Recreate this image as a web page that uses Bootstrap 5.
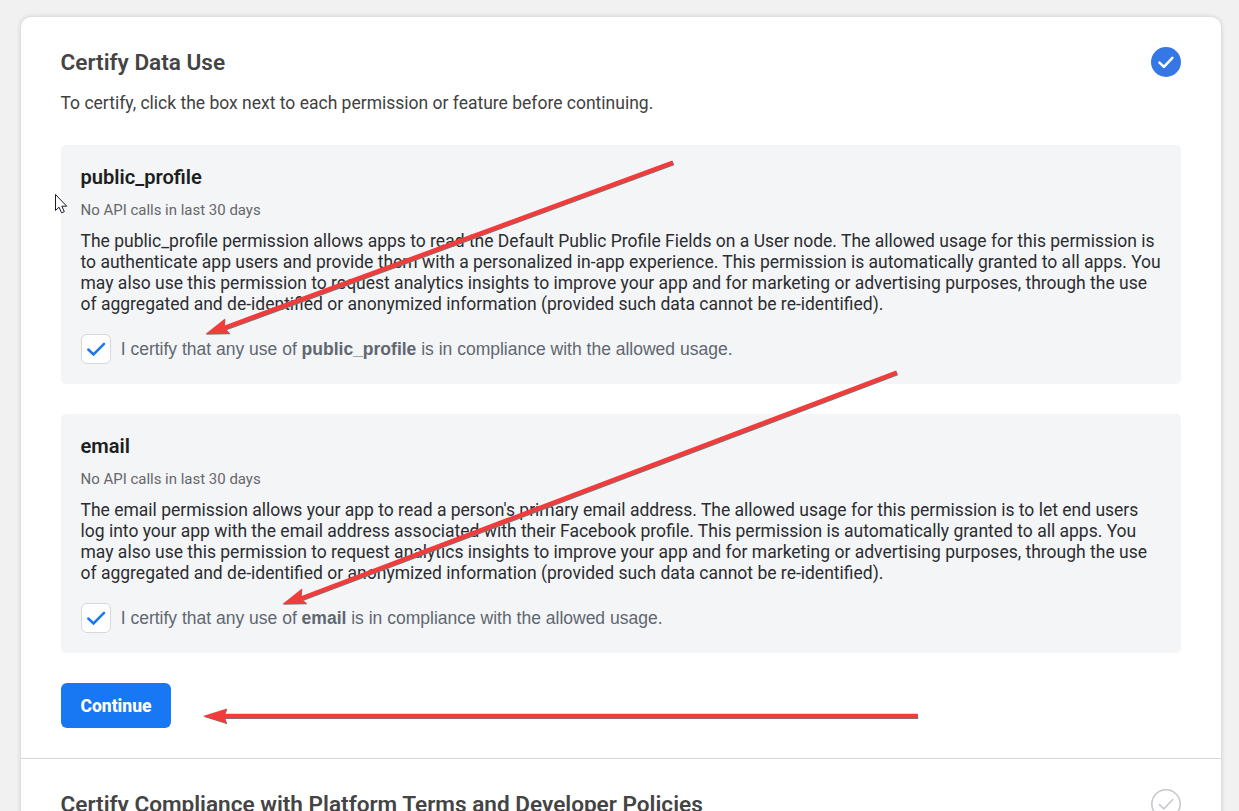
<!DOCTYPE html>
<html lang="en">
<head>
<meta charset="utf-8">
<meta name="viewport" content="width=device-width, initial-scale=1">
<title>Certify Data Use</title>
<link href="https://cdn.jsdelivr.net/npm/bootstrap@5.3.0/dist/css/bootstrap.min.css" rel="stylesheet">
<style>
  body { background: #f1f1f1; font: 400 17.5px/21px Roboto, sans-serif; color: #1c1e21; height: 811px; }
  .sheet { width: 1200px; height: 850px; margin: 17px 0 0 21px; border-radius: 10px; box-shadow: 0 0 5px rgba(0,0,0,.17); }
  .step { padding: 30px 40px 30px 39.5px; border-bottom: 1px solid #d4d6d9; }
  .step:last-child { border: 0; }
  .step-title { font-size: 22.58px; line-height: 30px; font-weight: 600; color: #444; padding-top: 1px; margin-bottom: -1px; }
  .intro { margin-top: 16px; margin-bottom: 31px; color: #414141; }
  .perm { height: 239px; margin: 0 0 30px .5px; padding: 20px 20px 20px 19.5px; background: #f4f5f7; border-radius: 5px; }
  .perm-name { font-size: 20.1px; line-height: 25px; font-weight: 600; }
  .calls { font-size: 14.97px; line-height: 20px; color: #65676b; margin: 10px 0 11px; }
  .about { color: #2b2d30; }
  .about span { display: block; white-space: nowrap; }
  .certify { gap: 9.7px; margin: 19px 0 0 .5px; font-family: "Liberation Sans", Arial, sans-serif; color: #606770; }
  .tick { width: 30px; height: 30px; background: #fff; border: 1px solid #d6d8dc; border-radius: 6px; }
  .btn-go { width: 110px; height: 45px; margin-left: .5px; padding: 2px 0 0; background: #1877f2; color: #fff; font-size: 17.5px; font-weight: 800; border: 0; border-radius: 6px; }
</style>
</head>
<body class="position-relative overflow-hidden">
<main class="sheet bg-white">
  <section class="step">
    <header class="d-flex justify-content-between align-items-start">
      <h1 class="step-title mt-0">Certify Data Use</h1>
      <svg width="30" height="30" viewBox="0 0 30 30"><circle cx="15" cy="15" r="15" fill="#3578e5"/><path d="M8.500 15.700l4.400 4.100 8.500-8.900" fill="none" stroke="#fff" stroke-width="2.500" stroke-linecap="round" stroke-linejoin="round"/></svg>
    </header>
    <p class="intro">To certify, click the box next to each permission or feature before continuing.</p>

    <article class="perm">
      <h2 class="perm-name m-0">public_profile</h2>
      <p class="calls">No API calls in last 30 days</p>
      <div class="about">
        <span>The public_profile permission allows apps to read the Default Public Profile Fields on a User node. The allowed usage for this permission is</span>
        <span>to authenticate app users and provide them with a personalized in-app experience. This permission is automatically granted to all apps. You</span>
        <span>may also use this permission to request analytics insights to improve your app and for marketing or advertising purposes, through the use</span>
        <span>of aggregated and de-identified or anonymized information (provided such data cannot be re-identified).</span>
      </div>
      <div class="certify d-flex align-items-center">
        <span class="tick d-flex"><svg width="28" height="28" viewBox="0 0 28 28"><path d="M6.300 14.500l5.200 5 10.500-10.600" fill="none" stroke="#1877f2" stroke-width="2.500" stroke-linecap="round"/></svg></span>
        <span class="text-nowrap">I certify that any use of <b>public_profile</b> is in compliance with the allowed usage.</span>
      </div>
    </article>

    <article class="perm">
      <h2 class="perm-name m-0">email</h2>
      <p class="calls">No API calls in last 30 days</p>
      <div class="about">
        <span>The email permission allows your app to read a person's primary email address. The allowed usage for this permission is to let end users</span>
        <span>log into your app with the email address associated with their Facebook profile. This permission is automatically granted to all apps. You</span>
        <span>may also use this permission to request analytics insights to improve your app and for marketing or advertising purposes, through the use</span>
        <span>of aggregated and de-identified or anonymized information (provided such data cannot be re-identified).</span>
      </div>
      <div class="certify d-flex align-items-center">
        <span class="tick d-flex"><svg width="28" height="28" viewBox="0 0 28 28"><path d="M6.300 14.500l5.200 5 10.500-10.600" fill="none" stroke="#1877f2" stroke-width="2.500" stroke-linecap="round"/></svg></span>
        <span class="text-nowrap">I certify that any use of <b>email</b> is in compliance with the allowed usage.</span>
      </div>
    </article>

    <button class="btn btn-go d-block">Continue</button>
  </section>

  <section class="step">
    <header class="d-flex justify-content-between align-items-start">
      <h1 class="step-title mt-0">Certify Compliance with Platform Terms and Developer Policies</h1>
      <svg width="30" height="30" viewBox="0 0 30 30"><g fill="none" stroke="#c5c9cf"><circle cx="15" cy="15" r="14.200" stroke-width="1.600"/><path d="M8.400 15.600l4.400 4.200 9-9.300" stroke-width="1.600" stroke-linecap="round"/></g></svg>
    </header>
  </section>
</main>

<!-- annotation arrows and pointer lie over the page -->
<svg class="position-absolute top-0 start-0 pe-none" width="1239" height="811" viewBox="0 0 1239 811">
  <defs>
    <g id="arrows">
      <path d="M673 162.500L224 328M896.800 372.500L301 598.500M917.700 716H224" fill="none" stroke-width="4.400"/>
      <path stroke="none" d="M205.500 334L225 318.500 224.500 327.500 230 333.500ZM282.500 604L302 588.500 301 598.500 307 603.500ZM203 716L227 708.500 224 716 227 723.500Z"/>
    </g>
  </defs>
  <use href="#arrows" x=".4" y=".8" fill="#777" stroke="#777"/>
  <use href="#arrows" fill="#f23c3c" stroke="#f23c3c"/>
  <path d="M55.500 194.500V210.500L59 207.200 61.600 212.800 64.300 211.600 61.800 206.200H66.700Z" fill="#fff" stroke="#1a1a2e" stroke-width="1"/>
</svg>
</body>
</html>
